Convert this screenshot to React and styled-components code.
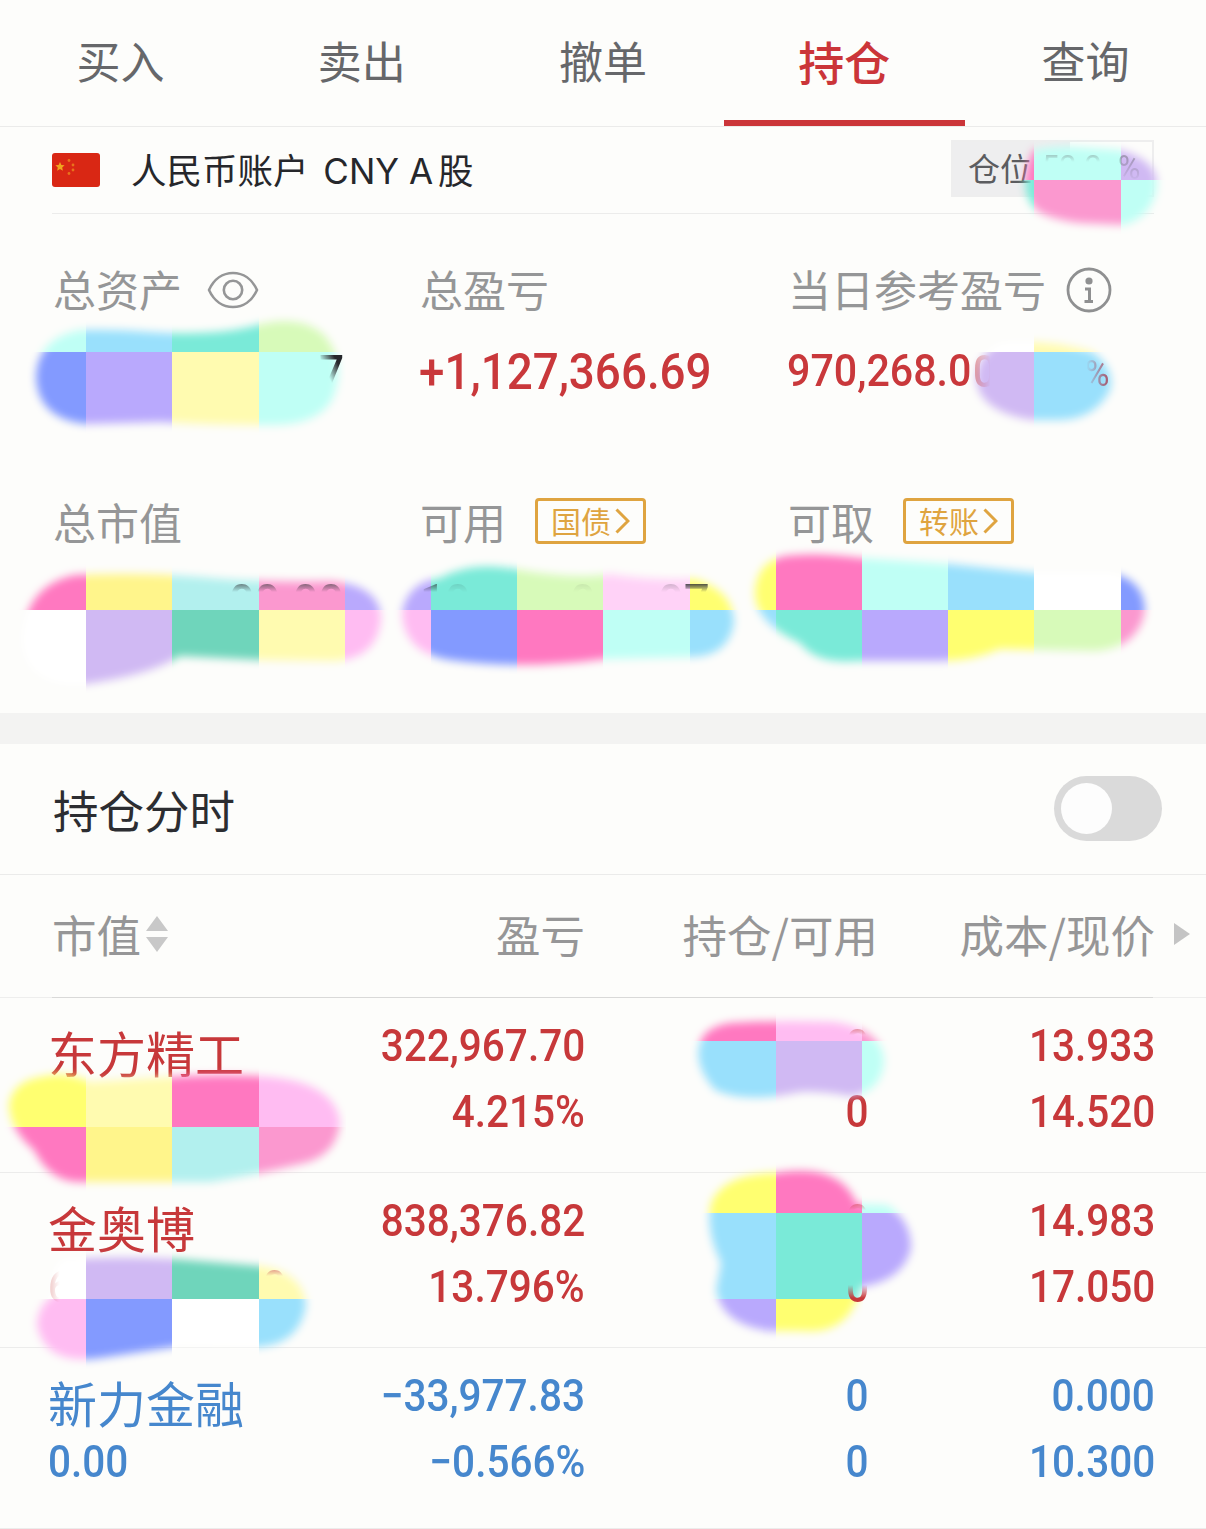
import styled, { createGlobalStyle } from "styled-components";

const GlobalStyle = createGlobalStyle`
    * {
        box-sizing: border-box;
    }
    body {
        margin: 0;
        background-color: #fdfdfb;
        font-family: "Noto Sans CJK SC", sans-serif;
    }
`;

const Page = styled.main`
    position: relative;
    width: 1206px;
    height: 1529px;
    overflow: hidden;
    color: #2c2d31;
`;

const Tabs = styled.nav`
    display: grid;
    grid-template-columns: repeat(5, 1fr);
    height: 127px;
    border-bottom: 1px solid #ebebea;
`;

const Tab = styled.button`
    height: 126px;
    padding: 0;
    border: 0;
    border-bottom: 6px solid ${(p) => (p.$active ? "#cb3539" : "transparent")};
    background: none;
    font-family: inherit;
    font-size: ${(p) => (p.$active ? 46 : 44)}px;
    line-height: 120px;
    font-weight: ${(p) => (p.$active ? 500 : 400)};
    color: ${(p) => (p.$active ? "#cb3539" : "#66676a")};
`;

const Account = styled.section`
    display: flex;
    align-items: center;
    height: 87px;
    margin: 0 52px;
    border-bottom: 1px solid #ececeb;

    svg {
        margin-right: 31px;
    }
    h1 {
        flex: 1;
        margin: 2px 0 0;
        font-family: Inter, "Noto Sans CJK SC", sans-serif;
        font-size: 35.5px;
        font-weight: 400;
        line-height: 50px;
        white-space: pre;
        color: #26272b;
    }
    h1 span {
        margin: 0 5px 0 5px;
        font-size: 35px;
    }
`;

const Position = styled.div`
    display: flex;
    align-items: center;
    width: 203px;
    height: 57px;
    margin-bottom: 3px;
    border: 2px solid #eeeeee;
    background: linear-gradient(90deg, #eeeeef 117px, #fdfdfb 117px);
    padding: 0 0 3px 15px;
    font-size: 32px;
    color: #5b5c5f;
    white-space: nowrap;
`;

const Summary = styled.section`
    display: grid;
    grid-template-columns: 367px 368px 1fr;
    grid-template-rows: 233px 266px;
    height: 499px;
    padding-left: 53px;
`;

const Cell = styled.div`
    padding-top: 44px;
`;

const Label = styled.div`
    display: flex;
    align-items: center;
    height: 60px;
    font-size: 43px;
    color: #959697;

    svg {
        margin: 4px 0 0 ${(p) => p.$gap || 0}px;
    }
`;

const LinkTag = styled.button`
    display: flex;
    align-items: center;
    justify-content: center;
    width: 111px;
    height: 46px;
    margin: 0 0 0 29px;
    padding: 0 0 3px;
    border: 3px solid #dfa440;
    border-radius: 4px;
    background: none;
    font-family: inherit;
    font-size: 30px;
    color: #dfa440;

    svg {
        margin: 3px 0 0 4px;
    }
`;

const Digits = styled.span`
    display: block;
    width: max-content;
    font-family: Roboto, sans-serif;
    font-size: ${(p) => p.$size || 45}px;
    font-weight: ${(p) => p.$weight || 500};
    line-height: 66px;
    color: ${(p) => p.$color || "inherit"};
    transform: scaleX(${(p) => p.$squeeze || 0.9});
    transform-origin: ${(p) => p.$origin || "left"};
`;

const Total = styled(Digits)`
    margin: ${(p) => p.$top || 21}px 0 0 -1px;
    color: #c9383b;
`;

const Band = styled.div`
    height: 31px;
    background-color: #f3f3f2;
`;

const ToggleRow = styled.section`
    display: flex;
    align-items: center;
    justify-content: space-between;
    height: 131px;
    padding: 0 44px 1px 53px;
    border-bottom: 1px solid #ebebea;
    font-size: 45.5px;
`;

const Toggle = styled.button`
    width: 108px;
    height: 65px;
    padding: 7px;
    border: 0;
    border-radius: 33px;
    background-color: #dadada;

    &::before {
        content: "";
        display: block;
        width: 51px;
        height: 51px;
        border-radius: 50%;
        background-color: #fdfdfd;
    }
`;

const Header = styled.div`
    display: grid;
    grid-template-columns: 300px 233px 293px 277px 1fr;
    align-items: start;
    height: 123px;
    padding-left: 52px;
    font-size: 44.5px;
    color: #969697;
    background:
        linear-gradient(#d9d9d8, #d9d9d8) 52px 100% / 1101px 1px no-repeat,
        linear-gradient(#eeeeed, #eeeeed) 0 100% / 100% 1px no-repeat;

    div {
        display: flex;
        align-items: center;
        justify-content: flex-end;
        height: 117px;
    }
    div:first-child {
        justify-content: flex-start;
    }
    svg {
        margin-left: 5px;
    }
`;

const ScrollArrow = styled.svg`
    margin-right: 16px;
`;

const Row = styled.div`
    display: grid;
    grid-template-columns: 300px 237px 284px 286px;
    height: ${(p) => (p.$last ? 181 : 175)}px;
    padding: 15px 0 0 48px;
    border-bottom: 1px solid #ececeb;
    color: ${(p) => (p.$down ? "#4687cd" : "#c7383a")};
`;

const Stock = styled.div`
    h2 {
        height: 66px;
        margin: 0;
        padding-top: 6px;
        font-size: 49px;
        font-weight: 400;
        line-height: 66px;
    }
`;

const Figures = styled.div`
    display: flex;
    flex-direction: column;
    align-items: flex-end;
`;

const Marks = styled.svg`
    position: absolute;
    top: 0;
    left: 0;
    pointer-events: none;
`;

// digits that still show through the painted-over areas
const Trace = styled(Digits)`
    position: absolute;
    left: ${(p) => p.$x}px;
    top: ${(p) => p.$y}px;
    line-height: 50px;
    opacity: ${(p) => p.$fade || 1};
    mask-image: ${(p) => p.$mask};
`;

const topOnly = "linear-gradient(180deg, #000 6px, transparent 14px)";

const traces = [
    { text: "7", x: 319, y: 348, size: 49, color: "#26272b", mask: "linear-gradient(to top right, transparent 40%, #000 72%)" },
    { text: "0", x: 973, y: 347, size: 45, color: "#c9383b", mask: "linear-gradient(90deg, #000, transparent 75%)", fade: 0.5 },
    { text: "%", x: 1085, y: 349, size: 37, color: "#a5485e", mask: "linear-gradient(90deg, transparent 5%, #000 90%)", fade: 0.85, weight: 400 },
    { text: "52.2", x: 1042, y: 142, size: 34, color: "#5b5c5f", mask: "linear-gradient(180deg, #000 12px, transparent 20px)", fade: 0.35, weight: 400 },
    { text: "%", x: 1118, y: 142, size: 34, color: "#5b5c5f", mask: "linear-gradient(180deg, #000 16px, transparent 40px)", fade: 0.4, weight: 400 },
    { text: "00.00", x: 229, y: 578, size: 50, color: "#26272b", mask: topOnly, fade: 0.55 },
    { text: "1", x: 420, y: 578, size: 50, color: "#26272b", mask: topOnly, fade: 0.6 },
    { text: "0", x: 445, y: 578, size: 50, color: "#26272b", mask: topOnly, fade: 0.12 },
    { text: "0", x: 570, y: 578, size: 50, color: "#26272b", mask: topOnly, fade: 0.08 },
    { text: "0", x: 658, y: 578, size: 50, color: "#26272b", mask: topOnly, fade: 0.2 },
    { text: "7", x: 684, y: 578, size: 50, color: "#26272b", mask: topOnly, fade: 0.8 },
    { text: "6", x: 48, y: 1262, size: 45, color: "#c7383a", mask: "linear-gradient(90deg, #000, transparent 50%)", fade: 0.3 },
    { text: "0", x: 263, y: 1262, size: 45, color: "#c7383a", mask: topOnly, fade: 0.6 },
    { text: "0", x: 846, y: 1021, size: 45, color: "#c7383a", mask: topOnly, fade: 0.6 },
    { text: "0", x: 846, y: 1196, size: 45, color: "#c7383a", mask: topOnly, fade: 0.6 },
    { text: "0", x: 846, y: 1262, size: 45, color: "#c7383a", mask: "linear-gradient(180deg, transparent 23px, #000 36px)" },
];

const Flag = () => (
    <svg width="48" height="34" viewBox="0 0 48 34">
        <rect width="48" height="34" rx="3" fill="#d92714" />
        <path d="M8 9l1.4 3 3.2.3-2.4 2.2.7 3.2L8 16l-2.9 1.700.7-3.200-2.400-2.200 3.200-.3z" fill="#f0a51e" />
        <g fill="#e8731c">
            <circle cx="17" cy="7.5" r="1.4" />
            <circle cx="21" cy="12" r="1.4" />
            <circle cx="21" cy="17" r="1.4" />
            <circle cx="17" cy="20.5" r="1.4" />
        </g>
    </svg>
);

const Eye = () => (
    <svg width="52" height="38" viewBox="0 0 52 38" fill="none" stroke="#959697" strokeWidth="2.6">
        <path d="M2 19C7 8 16 2 26 2s19 6 24 17c-5 11-14 17-24 17S7 30 2 19z" strokeLinejoin="round" />
        <circle cx="26" cy="19" r="9.2" />
    </svg>
);

const Info = () => (
    <svg width="46" height="46" viewBox="0 0 46 46" fill="none" stroke="#8f9091" strokeWidth="2.8">
        <circle cx="23" cy="23" r="21" />
        <circle cx="23" cy="14" r="3.6" fill="#8f9091" stroke="none" />
        <path d="M19 22h4.5v12M18.5 34.5h8.5" strokeWidth="3" />
    </svg>
);

const Chevron = () => (
    <svg width="15" height="26" viewBox="0 0 15 26" fill="none" stroke="#dfa440" strokeWidth="3">
        <path d="M1.5 1.5L13 13 1.5 24.5" />
    </svg>
);

const SortIcon = () => (
    <svg width="22" height="36" viewBox="0 0 22 36" fill="#c8c8c8">
        <path d="M11 0l11 15H0zM11 36L0 21h22z" />
    </svg>
);

const TILE_W = 86.2;
const TILE_H = 86.1;
const TILE_TOP = 7.6;

// each blob: brush outline and the [column, row, colour] tiles below it
const blobs = [
    {
        path: "M1034 150Q1055 146 1075 147L1120 150Q1157 160 1157 184Q1154 216 1124 225L1080 223Q1040 218 1032 205Q1018 185 1034 150Z",
        tiles: [[11, 1, "#ff78c0"], [12, 1, "#bffff5"], [13, 1, "#d0b9f3"], [11, 2, "#7aead8"], [12, 2, "#fb98cf"], [13, 2, "#bffff5"]],
    },
    {
        path: "M80 330Q110 329 150 332Q210 336 250 327Q300 312 325 336Q344 360 336 388Q328 425 270 425Q210 425 160 422L85 424Q37 418 36 376Q38 338 80 330Z",
        tiles: [[0, 3, "#bffff5"], [1, 3, "#99e0fc"], [2, 3, "#7aead8"], [3, 3, "#d7fab9"], [0, 4, "#839aff"], [1, 4, "#b9a9fd"], [2, 4, "#fffbb0"], [3, 4, "#bffff5"]],
    },
    {
        path: "M1000 343Q1045 338 1092 352Q1115 368 1110 390Q1095 419 1060 420L1032 420Q980 412 976 380Q977 355 1000 343Z",
        tiles: [[11, 3, "#fff"], [12, 3, "#fffbb0"], [11, 4, "#d0b9f3"], [12, 4, "#99e0fc"]],
    },
    {
        path: "M76 575Q140 572 200 577Q260 583 330 581Q380 585 381 618Q378 658 335 661L260 660L180 656Q150 675 85 684Q26 688 22 640Q26 584 76 575Z",
        tiles: [[0, 6, "#ff78c0"], [1, 6, "#fff58b"], [2, 6, "#b2f0ee"], [3, 6, "#fb98cf"], [4, 6, "#b9a9fd"], [0, 7, "#fff"], [1, 7, "#d0b9f3"], [2, 7, "#6fd5bb"], [3, 7, "#fffbb0"], [4, 7, "#ffbcf2"]],
    },
    {
        path: "M440 578Q470 561 515 569Q575 580 610 574Q650 581 695 579Q734 591 734 623Q728 657 690 657L605 659Q520 670 450 660Q403 653 402 612Q408 582 440 578Z",
        tiles: [[4, 6, "#b9a9fd"], [5, 6, "#7aead8"], [6, 6, "#d7fab9"], [7, 6, "#ffd2f7"], [8, 6, "#ffff70"], [4, 7, "#ffbcf2"], [5, 7, "#839aff"], [6, 7, "#ff78c0"], [7, 7, "#bffff5"], [8, 7, "#99e0fc"]],
    },
    {
        path: "M785 556Q815 552 860 558L950 564L1035 573L1110 573Q1144 579 1145 611Q1138 648 1095 651L1000 649Q970 662 935 661L855 661Q816 664 800 643Q753 622 755 590Q758 561 785 556Z",
        tiles: [[8, 6, "#ffff70"], [9, 6, "#ff78c0"], [10, 6, "#bffff5"], [11, 6, "#99e0fc"], [12, 6, "#fff"], [13, 6, "#839aff"], [8, 7, "#99e0fc"], [9, 7, "#7aead8"], [10, 7, "#b9a9fd"], [11, 7, "#ffff70"], [12, 7, "#d7fab9"], [13, 7, "#fb98cf"]],
    },
    {
        path: "M40 1077Q65 1070 90 1082Q150 1078 190 1076Q260 1073 295 1081Q337 1092 340 1123Q336 1157 300 1164Q250 1176 210 1182L80 1182Q50 1182 34 1150Q10 1130 9 1105Q12 1082 40 1077Z",
        tiles: [[0, 12, "#ffff70"], [1, 12, "#fffbb0"], [2, 12, "#ff78c0"], [3, 12, "#ffbcf2"], [0, 13, "#ff78c0"], [1, 13, "#fff58b"], [2, 13, "#b2f0ee"], [3, 13, "#fb98cf"]],
    },
    {
        path: "M64 1259Q120 1256 175 1259L260 1266Q303 1272 306 1305Q300 1343 260 1347L180 1346L100 1358Q45 1366 37 1325Q38 1305 54 1295Q48 1270 64 1259Z",
        tiles: [[0, 14, "#fff"], [1, 14, "#d0b9f3"], [2, 14, "#6fd5bb"], [3, 14, "#fffbb0"], [0, 15, "#ffbcf2"], [1, 15, "#839aff"], [2, 15, "#fff"], [3, 15, "#99e0fc"]],
    },
    {
        path: "M730 1023Q780 1020 835 1022Q885 1031 884 1063Q880 1093 850 1096Q820 1091 800 1092Q745 1104 715 1090Q693 1065 700 1043Q705 1027 730 1023Z",
        tiles: [[8, 11, "#ff78c0"], [9, 11, "#ffbcf2"], [10, 11, "#fb98cf"], [8, 12, "#99e0fc"], [9, 12, "#d0b9f3"], [10, 12, "#bffff5"]],
    },
    {
        path: "M775 1173Q840 1162 857 1204L887 1205Q911 1220 911 1248Q904 1280 861 1287Q850 1335 803 1331L770 1331Q722 1325 716 1290L721 1263Q705 1230 711 1203Q723 1174 775 1173Z",
        tiles: [[8, 13, "#ffff70"], [9, 13, "#ff78c0"], [10, 13, "#bffff5"], [8, 14, "#99e0fc"], [9, 14, "#7aead8"], [10, 14, "#b9a9fd"], [8, 15, "#b9a9fd"], [9, 15, "#ffff70"]],
    },
];

const Redactions = () => (
    <Marks width="1206" height="1529" viewBox="0 0 1206 1529">
        <defs>
            <filter id="soft" x="-10%" y="-20%" width="120%" height="140%">
                <feGaussianBlur stdDeviation="4.5" />
            </filter>
            {blobs.map((blob, i) => (
                <mask key={i} id={`brush${i}`} maskUnits="userSpaceOnUse" x="0" y="0" width="1206" height="1529">
                    <path d={blob.path} fill="#fff" filter="url(#soft)" />
                </mask>
            ))}
        </defs>
        {blobs.map((blob, i) => (
            <g key={i} mask={`url(#brush${i})`}>
                {blob.tiles.map(([col, row, color]) => (
                    <rect
                        key={`${col}-${row}`}
                        x={Math.round(col * TILE_W)}
                        y={Math.round(TILE_TOP + row * TILE_H)}
                        width="87"
                        height="87"
                        fill={color}
                    />
                ))}
            </g>
        ))}
    </Marks>
);

const holdings = [
    { name: "东方精工", profit: "322,967.70", rate: "4.215%", held: ["", "0"], cost: "13.933", price: "14.520" },
    { name: "金奥博", profit: "838,376.82", rate: "13.796%", held: ["", ""], cost: "14.983", price: "17.050" },
    { name: "新力金融", value: "0.00", profit: "−33,977.83", rate: "−0.566%", held: ["0", "0"], cost: "0.000", price: "10.300", down: true },
];

const App = () => {
    return (
        <Page>
            <GlobalStyle />
            <Tabs>
                {["买入", "卖出", "撤单", "持仓", "查询"].map((name) => (
                    <Tab key={name} $active={name === "持仓"}>{name}</Tab>
                ))}
            </Tabs>

            <Account>
                <Flag />
                <h1>人民币账户<span> CNY A</span>股</h1>
                <Position>仓位</Position>
            </Account>

            <Summary>
                <Cell>
                    <Label $gap={25}>总资产<Eye /></Label>
                </Cell>
                <Cell>
                    <Label>总盈亏</Label>
                    <Total $size={50} $squeeze={0.915}>+1,127,366.69</Total>
                </Cell>
                <Cell>
                    <Label $gap={20}>当日参考盈亏<Info /></Label>
                    <Total $top={20} $squeeze={0.915}>970,268.0</Total>
                </Cell>
                <Cell>
                    <Label>总市值</Label>
                </Cell>
                <Cell>
                    <Label>可用<LinkTag>国债<Chevron /></LinkTag></Label>
                </Cell>
                <Cell>
                    <Label>可取<LinkTag>转账<Chevron /></LinkTag></Label>
                </Cell>
            </Summary>

            <Band />

            <ToggleRow>
                持仓分时
                <Toggle aria-label="持仓分时" />
            </ToggleRow>

            <Header>
                <div>市值<SortIcon /></div>
                <div>盈亏</div>
                <div>持仓/可用</div>
                <div>成本/现价</div>
                <div>
                    <ScrollArrow width="16" height="22" viewBox="0 0 16 22" fill="#c4c4c4">
                        <path d="M0 0l16 11L0 22z" />
                    </ScrollArrow>
                </div>
            </Header>

            {holdings.map((item, i) => (
                <Row key={item.name} $down={item.down} $last={i === holdings.length - 1}>
                    <Stock>
                        <h2>{item.name}</h2>
                        {item.value && <Digits>{item.value}</Digits>}
                    </Stock>
                    <Figures>
                        <Digits $origin="right">{item.profit}</Digits>
                        <Digits $origin="right">{item.rate}</Digits>
                    </Figures>
                    <Figures>
                        <Digits $origin="right">{item.held[0] || "\u00a0"}</Digits>
                        <Digits $origin="right">{item.held[1]}</Digits>
                    </Figures>
                    <Figures>
                        <Digits $origin="right">{item.cost}</Digits>
                        <Digits $origin="right">{item.price}</Digits>
                    </Figures>
                </Row>
            ))}

            <Redactions />
            {traces.map((t, i) => (
                <Trace key={i} $x={t.x} $y={t.y} $size={t.size} $color={t.color} $mask={t.mask} $fade={t.fade} $weight={t.weight}>
                    {t.text}
                </Trace>
            ))}
        </Page>
    );
};

export default App;
